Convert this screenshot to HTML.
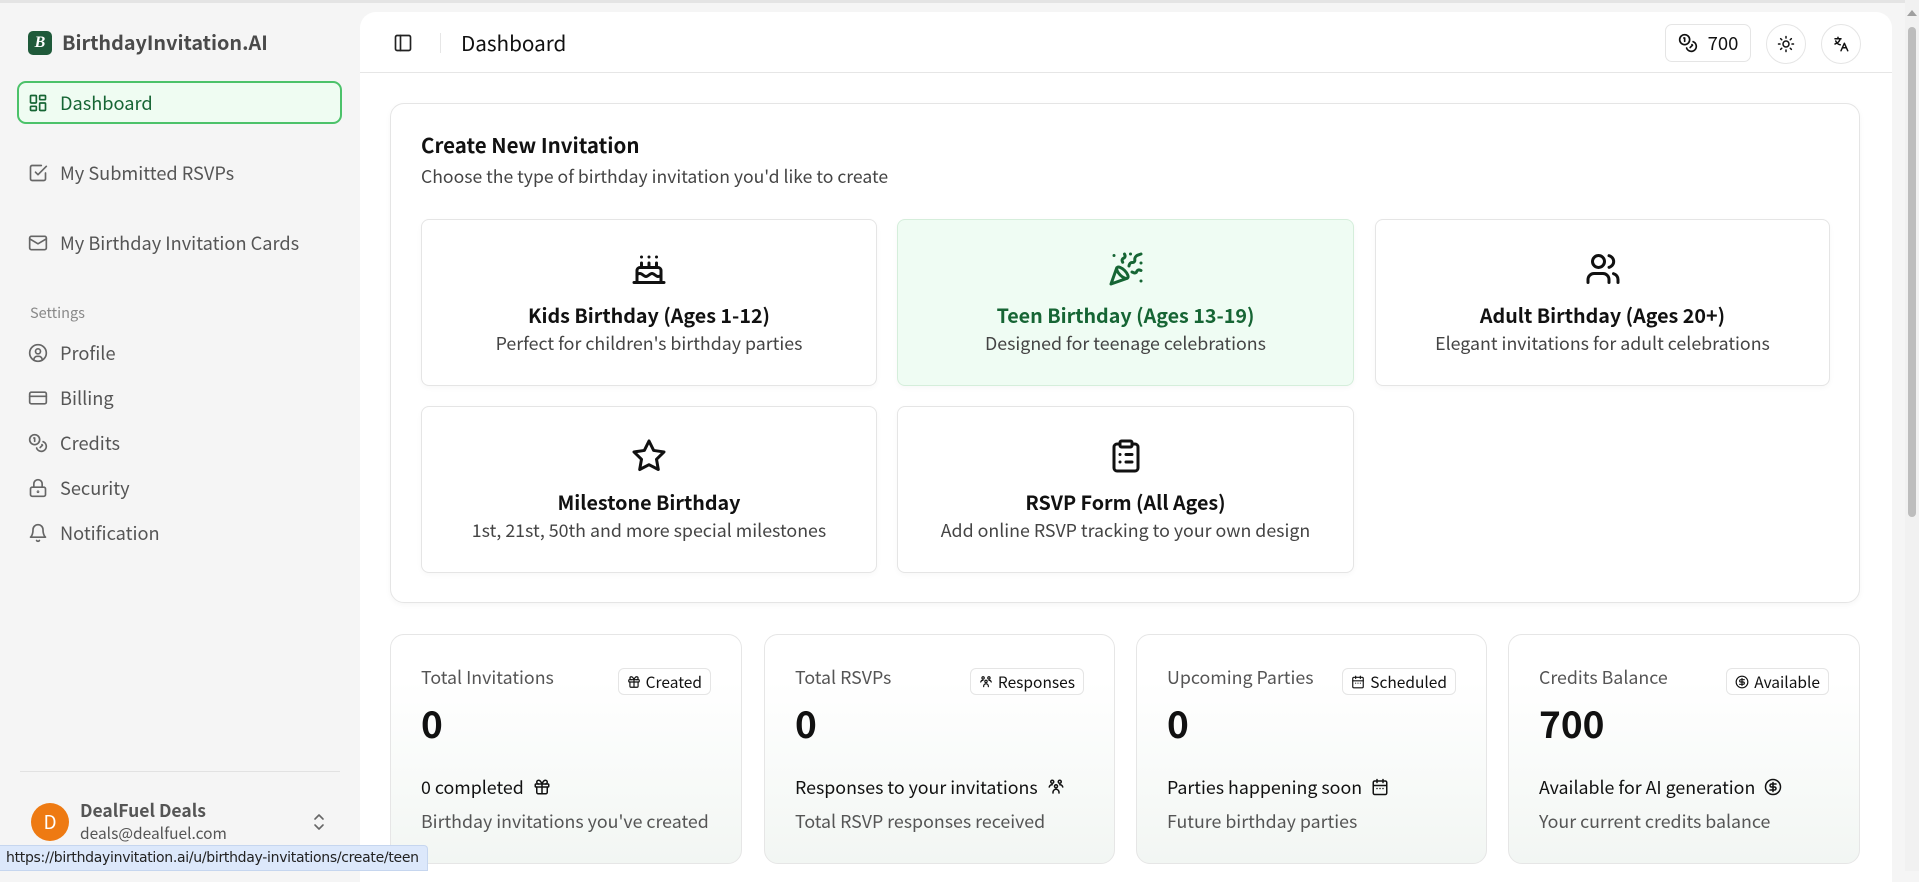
<!DOCTYPE html>
<html><head><meta charset="utf-8"><style>
*{box-sizing:border-box;margin:0;padding:0}
body{width:1919px;height:871px;overflow:hidden;background:#f5f5f5;font-family:"Noto Sans CJK SC","Liberation Sans",sans-serif;color:#111;position:relative}
.a{position:absolute;white-space:nowrap}
svg{display:block}
.ic{fill:none;stroke:currentColor;stroke-width:2;stroke-linecap:round;stroke-linejoin:round}
.nav{position:absolute;left:28px;display:flex;align-items:center;gap:12px;font-size:18.2px;color:#555;line-height:24px}
.nav svg{width:20px;height:20px;color:#666}
.card{position:absolute;border:1px solid #e5e5e5;border-radius:8px;background:#fff;text-align:center;box-shadow:0 2px 6px rgba(0,0,0,.03)}
.card svg{width:36px;height:36px;margin:31px auto 0;color:#111}
.card .t{font-size:19.7px;font-weight:600;margin-top:15px;line-height:26px}
.card .d{font-size:17.8px;color:#444;line-height:24px;margin-top:3px}
.st{position:absolute;top:634px;height:230px;border:1px solid #e6e6e6;border-radius:14px;background:linear-gradient(#fff 20%,#f2f6f3)}
.st .l{position:absolute;left:30px;top:30px;font-size:17.8px;color:#555;line-height:24px}
.st .b{position:absolute;right:30px;top:33px;height:27px;border:1px solid #e5e5e5;border-radius:6px;background:#fff;font-size:15.5px;padding:0 8px;display:flex;align-items:center;gap:5px;line-height:20px}
.st .b svg{width:14px;height:14px}
.st .v{position:absolute;left:30px;top:63px;font-size:37px;font-weight:700;line-height:48px}
.st .s{position:absolute;left:30px;top:140px;font-size:17.8px;display:flex;align-items:center;gap:9px;line-height:24px}
.st .s svg{width:18px;height:18px}
.st .d{position:absolute;left:30px;top:174px;font-size:17.8px;color:#555;line-height:24px}
</style></head><body>
<div class="a" style="left:0;top:0;width:1919px;height:3px;background:#e4e4e4"></div>
<div class="a" style="left:28px;top:31px;width:24px;height:24px;border-radius:5px;background:#1f5a3a;color:#fff;font:italic 700 16px 'Liberation Serif',serif;text-align:center;line-height:24px">B</div>
<div class="a" style="left:62px;top:27px;font-size:19.8px;font-weight:600;color:#4a4a4a;line-height:30px">BirthdayInvitation.AI</div>
<div class="a" style="left:17px;top:81px;width:325px;height:43px;border:2px solid #4cc26a;border-radius:9px;background:#effcf2"></div>
<div class="nav" style="top:91px;color:#166534"><svg viewBox="0 0 24 24" class="ic" style="color:#166534"><rect x="3" y="3" width="7" height="9" rx="1"/><rect x="14" y="3" width="7" height="5" rx="1"/><rect x="14" y="12" width="7" height="9" rx="1"/><rect x="3" y="16" width="7" height="5" rx="1"/></svg>Dashboard</div>
<div class="nav" style="top:161px"><svg viewBox="0 0 24 24" class="ic"><path d="M9 11l3 3L22 4"/><path d="M21 12v7a2 2 0 0 1-2 2H5a2 2 0 0 1-2-2V5a2 2 0 0 1 2-2h11"/></svg>My Submitted RSVPs</div>
<div class="nav" style="top:231px"><svg viewBox="0 0 24 24" class="ic"><rect x="2" y="4" width="20" height="16" rx="2"/><path d="M22 7l-10 6L2 7"/></svg>My Birthday Invitation Cards</div>
<div class="a" style="left:30px;top:303px;font-size:14.5px;color:#888;line-height:20px">Settings</div>
<div class="nav" style="top:341px"><svg viewBox="0 0 24 24" class="ic"><circle cx="12" cy="12" r="10"/><circle cx="12" cy="10" r="3"/><path d="M7 20.7v-.7a4 4 0 0 1 4-4h2a4 4 0 0 1 4 4v.7"/></svg>Profile</div>
<div class="nav" style="top:386px"><svg viewBox="0 0 24 24" class="ic"><rect x="2" y="5" width="20" height="14" rx="2"/><path d="M2 10h20"/></svg>Billing</div>
<div class="nav" style="top:431px"><svg viewBox="0 0 24 24" class="ic"><circle cx="8" cy="8" r="6"/><path d="M18.1 10.4A6 6 0 1 1 10.3 18"/><path d="M7 6h1v4"/><path d="M16.7 13.9l.7.7-2.8 2.8"/></svg>Credits</div>
<div class="nav" style="top:476px"><svg viewBox="0 0 24 24" class="ic"><rect x="3" y="11" width="18" height="11" rx="2"/><path d="M7 11V7a5 5 0 0 1 10 0v4"/><circle cx="12" cy="16.5" r=".6"/></svg>Security</div>
<div class="nav" style="top:521px"><svg viewBox="0 0 24 24" class="ic"><path d="M6 8a6 6 0 0 1 12 0c0 7 3 9 3 9H3s3-2 3-9"/><path d="M10.3 21a1.94 1.94 0 0 0 3.4 0"/></svg>Notification</div>
<div class="a" style="left:20px;top:771px;width:320px;height:1px;background:#e2e2e2"></div>
<div class="a" style="left:31px;top:803px;width:38px;height:38px;border-radius:50%;background:#ee7a12;color:#fff;font-size:19px;text-align:center;line-height:38px">D</div>
<div class="a" style="left:80px;top:799px;font-size:17.5px;font-weight:700;color:#555;line-height:24px">DealFuel Deals</div>
<div class="a" style="left:80px;top:823px;font-size:15.5px;color:#555;line-height:20px">deals@dealfuel.com</div>
<svg class="a ic" style="left:311px;top:812px;color:#666" width="16" height="20" viewBox="0 0 16 20"><path d="M4 7l4-4 4 4M4 13l4 4 4-4" stroke-width="1.6"/></svg>
<div class="a" style="left:360px;top:12px;width:1532px;height:870px;background:#fff;border-radius:16px 16px 0 0"></div>
<div class="a" style="left:360px;top:72px;width:1532px;height:1px;background:#e6e6e6"></div>
<svg class="a ic" style="left:393px;top:33px;color:#222" width="20" height="20" viewBox="0 0 24 24"><rect x="3" y="3" width="18" height="18" rx="2"/><path d="M9 3v18"/></svg>
<div class="a" style="left:440px;top:33px;width:1px;height:20px;background:#e6e6e6"></div>
<div class="a" style="left:461px;top:27px;font-size:20.7px;color:#111;line-height:30px">Dashboard</div>
<div class="a" style="left:1665px;top:24px;width:86px;height:38px;border:1px solid #e5e5e5;border-radius:7px;display:flex;align-items:center;justify-content:center;gap:10px;font-size:18.5px"><svg viewBox="0 0 24 24" class="ic" width="20" height="20"><circle cx="8" cy="8" r="6"/><path d="M18.1 10.4A6 6 0 1 1 10.3 18"/><path d="M7 6h1v4"/><path d="M16.7 13.9l.7.7-2.8 2.8"/></svg>700</div>
<div class="a" style="left:1766px;top:24px;width:40px;height:40px;border:1px solid #e5e5e5;border-radius:50%"><svg viewBox="0 0 24 24" class="ic" width="18" height="18" style="margin:10px"><circle cx="12" cy="12" r="4"/><path d="M12 2v2M12 20v2M4.9 4.9l1.4 1.4M17.7 17.7l1.4 1.4M2 12h2M20 12h2M6.3 17.7l-1.4 1.4M19.1 4.9l-1.4 1.4"/></svg></div>
<div class="a" style="left:1821px;top:24px;width:40px;height:40px;border:1px solid #e5e5e5;border-radius:50%"><svg viewBox="0 0 24 24" class="ic" width="18" height="18" style="margin:10px" stroke-width="1.8"><path d="M4 5h8M8 3v2M5 8c1 3 4 5 6 5M11 5c-1 4-4 6-7 7M12 21l4.5-10 4.5 10M14 17h5"/></svg></div>
<div class="a" style="left:1905px;top:0;width:14px;height:871px;background:#f1f1f1"></div>
<div class="a" style="left:1908px;top:27px;width:8px;height:490px;background:#bdbdbd;border-radius:4px"></div>
<svg class="a" style="left:1906px;top:9px" width="12" height="8"><path d="M1 7L6 1L11 7Z" fill="#a0a0a0"/></svg>
<div class="a" style="left:390px;top:103px;width:1470px;height:500px;border:1px solid #e5e5e5;border-radius:14px;box-shadow:0 2px 6px rgba(0,0,0,.04)"></div>
<div class="a" style="left:421px;top:129px;font-size:20.5px;font-weight:600;line-height:30px">Create New Invitation</div>
<div class="a" style="left:421px;top:165px;font-size:17.6px;color:#444;line-height:24px">Choose the type of birthday invitation you'd like to create</div>
<div class="card" style="left:421px;top:219px;width:456px;height:167px"><svg viewBox="0 0 24 24" class="ic"><path d="M20 21v-8a2 2 0 0 0-2-2H6a2 2 0 0 0-2 2v8"/><path d="M4 16s.5-1 2-1 2.5 2 4 2 2.5-2 4-2 2.5 2 4 2 2-1 2-1"/><path d="M2 21h20"/><path d="M7 8v3M12 8v3M17 8v3M7 4h.01M12 4h.01M17 4h.01"/></svg><div class="t">Kids Birthday (Ages 1-12)</div><div class="d">Perfect for children's birthday parties</div></div>
<div class="card" style="left:897px;top:219px;width:457px;height:167px;background:#effcf3;border-color:#d5eedb"><svg viewBox="0 0 24 24" class="ic" style="color:#166534"><path d="M5.8 11.3L2 22l10.7-3.8"/><path d="M4 3h.01M22 8h.01M15 2h.01M22 20h.01"/><path d="M22 2l-2.2.8a2.9 2.9 0 0 0-1.9 3.2c.1.9-.6 1.7-1.5 1.7h-.4c-.9 0-1.6.7-1.8 1.5L14 10"/><path d="M22 13l-.8-.3c-.8-.3-1.7.1-2 .9-.3.9-1.2 1.3-2 .9L16 14"/><path d="M11 2l.3.8c.3.8-.1 1.7-.9 2-.8.3-1.2 1.1-.9 2l.3.7"/><path d="M11.1 13c1.9 1.9 2.8 4.2 2 5s-3.1-.1-5-2-2.8-4.2-2-5 3.1.1 5 2z"/></svg><div class="t" style="color:#166534">Teen Birthday (Ages 13-19)</div><div class="d">Designed for teenage celebrations</div></div>
<div class="card" style="left:1375px;top:219px;width:455px;height:167px"><svg viewBox="0 0 24 24" class="ic"><path d="M16 21v-2a4 4 0 0 0-4-4H6a4 4 0 0 0-4 4v2"/><circle cx="9" cy="7" r="4"/><path d="M22 21v-2a4 4 0 0 0-3-3.9M16 3.1a4 4 0 0 1 0 7.8"/></svg><div class="t">Adult Birthday (Ages 20+)</div><div class="d">Elegant invitations for adult celebrations</div></div>
<div class="card" style="left:421px;top:406px;width:456px;height:167px"><svg viewBox="0 0 24 24" class="ic"><path d="M12 2l3.1 6.3 6.9 1-5 4.9 1.2 6.8L12 17.8 5.8 21l1.2-6.8-5-4.9 6.9-1z"/></svg><div class="t">Milestone Birthday</div><div class="d">1st, 21st, 50th and more special milestones</div></div>
<div class="card" style="left:897px;top:406px;width:457px;height:167px"><svg viewBox="0 0 24 24" class="ic"><rect x="8" y="2" width="8" height="4" rx="1"/><path d="M16 4h2a2 2 0 0 1 2 2v14a2 2 0 0 1-2 2H6a2 2 0 0 1-2-2V6a2 2 0 0 1 2-2h2"/><path d="M12 11h4M12 16h4M8 11h.01M8 16h.01"/></svg><div class="t">RSVP Form (All Ages)</div><div class="d">Add online RSVP tracking to your own design</div></div>
<div class="st" style="left:390px;width:352px"><div class="l">Total Invitations</div><div class="b"><svg viewBox="0 0 24 24" class="ic"><rect x="3" y="8" width="18" height="4" rx="1"/><path d="M12 8v13M19 12v7a2 2 0 0 1-2 2H7a2 2 0 0 1-2-2v-7M7.5 8a2.5 2.5 0 0 1 0-5C10 3 12 8 12 8s2-5 4.5-5a2.5 2.5 0 0 1 0 5"/></svg>Created</div><div class="v">0</div><div class="s">0 completed <svg viewBox="0 0 24 24" class="ic"><rect x="3" y="8" width="18" height="4" rx="1"/><path d="M12 8v13M19 12v7a2 2 0 0 1-2 2H7a2 2 0 0 1-2-2v-7M7.5 8a2.5 2.5 0 0 1 0-5C10 3 12 8 12 8s2-5 4.5-5a2.5 2.5 0 0 1 0 5"/></svg></div><div class="d">Birthday invitations you've created</div></div>
<div class="st" style="left:764px;width:351px"><div class="l">Total RSVPs</div><div class="b"><svg viewBox="0 0 24 24" class="ic"><circle cx="7" cy="5" r="2"/><circle cx="17" cy="5" r="2"/><circle cx="12" cy="11" r="2"/><path d="M3 12a4 4 0 0 1 4-3M21 12a4 4 0 0 0-4-3M8 20v-1a4 4 0 0 1 8 0v1"/></svg>Responses</div><div class="v">0</div><div class="s">Responses to your invitations <svg viewBox="0 0 24 24" class="ic"><circle cx="7" cy="5" r="2"/><circle cx="17" cy="5" r="2"/><circle cx="12" cy="11" r="2"/><path d="M3 12a4 4 0 0 1 4-3M21 12a4 4 0 0 0-4-3M8 20v-1a4 4 0 0 1 8 0v1"/></svg></div><div class="d">Total RSVP responses received</div></div>
<div class="st" style="left:1136px;width:351px"><div class="l">Upcoming Parties</div><div class="b"><svg viewBox="0 0 24 24" class="ic"><rect x="3" y="4" width="18" height="18" rx="2"/><path d="M16 2v4M8 2v4M3 10h18M8 14h.01M12 14h.01M16 14h.01"/></svg>Scheduled</div><div class="v">0</div><div class="s">Parties happening soon <svg viewBox="0 0 24 24" class="ic"><rect x="3" y="4" width="18" height="18" rx="2"/><path d="M16 2v4M8 2v4M3 10h18M8 14h.01M12 14h.01M16 14h.01"/></svg></div><div class="d">Future birthday parties</div></div>
<div class="st" style="left:1508px;width:352px"><div class="l">Credits Balance</div><div class="b"><svg viewBox="0 0 24 24" class="ic"><circle cx="12" cy="12" r="10"/><path d="M16 8h-6a2 2 0 1 0 0 4h4a2 2 0 1 1 0 4H8M12 18V6"/></svg>Available</div><div class="v">700</div><div class="s">Available for AI generation <svg viewBox="0 0 24 24" class="ic"><circle cx="12" cy="12" r="10"/><path d="M16 8h-6a2 2 0 1 0 0 4h4a2 2 0 1 1 0 4H8M12 18V6"/></svg></div><div class="d">Your current credits balance</div></div>
<div class="a" style="left:0;top:845px;width:428px;height:26px;background:#dce8fb;border:1px solid #c6d6ef;border-left:none;border-radius:0 4px 0 0;font:14px 'DejaVu Sans','Liberation Sans',sans-serif;color:#222;line-height:24px;padding-left:6px;letter-spacing:-0.3px">https://birthdayinvitation.ai/u/birthday-invitations/create/teen</div>
</body></html>
